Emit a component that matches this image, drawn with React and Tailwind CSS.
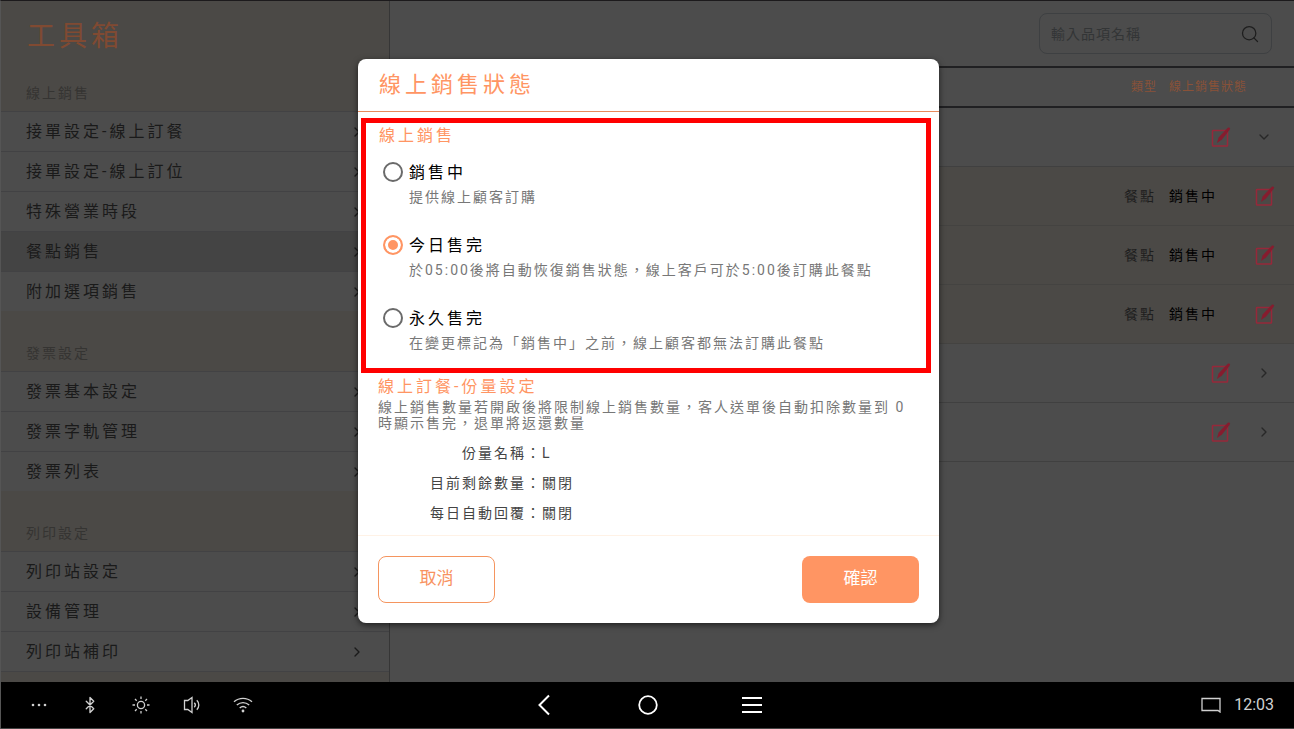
import React, { useState } from 'react';
import { Bluetooth, ChevronDown, ChevronRight, Search } from 'lucide-react';

const menuSections = [
  {
    title: '線上銷售',
    items: ['接單設定-線上訂餐', '接單設定-線上訂位', '特殊營業時段', '餐點銷售', '附加選項銷售'],
  },
  { title: '發票設定', items: ['發票基本設定', '發票字軌管理', '發票列表'] },
  { title: '列印設定', items: ['列印站設定', '設備管理', '列印站補印'] },
];

const products = [
  { id: 1, group: true, open: true },
  { id: 2, type: '餐點', status: '銷售中' },
  { id: 3, type: '餐點', status: '銷售中' },
  { id: 4, type: '餐點', status: '銷售中' },
  { id: 5, group: true },
  { id: 6, group: true },
];

const saleOptions = [
  { value: 'on', label: '銷售中', hint: '提供線上顧客訂購' },
  {
    value: 'today',
    label: '今日售完',
    hint: '於05:00後將自動恢復銷售狀態，線上客戶可於5:00後訂購此餐點',
  },
  {
    value: 'forever',
    label: '永久售完',
    hint: '在變更標記為「銷售中」之前，線上顧客都無法訂購此餐點',
  },
];

const portion = [
  { label: '份量名稱', value: 'L' },
  { label: '目前剩餘數量', value: '關閉' },
  { label: '每日自動回覆', value: '關閉' },
];

const EditIcon = () => (
  <svg width="20" height="20" viewBox="0 0 20 20" fill="none">
    <rect x="1.5" y="3.5" width="15" height="15.500" rx="0.6" stroke="#96283a" strokeWidth="1.500" />
    <path d="M16.800 .8c1.300-1 2.900.4 2 1.800L11 12.600 6 16l1.600-5.600z" fill="#861c2e" />
  </svg>
);

const EditButton = () => (
  <button type="button" aria-label="編輯" className="block">
    <EditIcon />
  </button>
);

const Sidebar = () => (
  <aside className="w-[389px] shrink-0 overflow-hidden border-r border-[#363636] bg-[#4b4946]">
    <h1 className="flex h-[70px] items-center pt-0.5 pl-[26px] text-[28px] tracking-[4px] text-[#804a32]">
      工具箱
    </h1>
    {menuSections.map((section, i) => (
      <section key={section.title}>
        <h2
          className={`flex items-end pb-2 pl-[25px] text-sm tracking-[2px] text-[#353432] ${
            i === 0 ? 'h-10' : 'h-[60px]'
          }`}
        >
          {section.title}
        </h2>
        <ul>
          {section.items.map((item) => (
            <li key={item}>
              <a
                href="#"
                className={`flex h-10 items-center justify-between border-t border-[#424244] pr-6 pl-[25px] tracking-[3px] text-[#1a1a1a] ${
                  item === '餐點銷售' ? 'bg-[#444]' : 'bg-[#4c4c4c]'
                }`}
              >
                {item}
                <ChevronRight size={16} strokeWidth={2} />
              </a>
            </li>
          ))}
        </ul>
      </section>
    ))}
    <div className="h-4 border-t border-[#424244]" />
  </aside>
);

const ProductTable = () => (
  <table className="w-full table-fixed text-left">
    <colgroup>
      <col />
      <col className="w-20" />
      <col className="w-20" />
      <col className="w-[45px]" />
    </colgroup>
    <thead>
      <tr className="h-10 border-y-2 border-[#202022] text-xs tracking-[1px] whitespace-nowrap text-[#8a5238]">
        <th aria-label="品項" />
        <th className="pr-3 text-right font-normal">類型</th>
        <th className="font-normal">線上銷售狀態</th>
        <th aria-label="操作" />
      </tr>
    </thead>
    <tbody>
      {products.map((p) =>
        p.group ? (
          <tr key={p.id} className="h-[59px] border-b border-[#404040] bg-[#4c4c4c]">
            <td />
            <td />
            <td>
              <div className="flex justify-end pr-[18px]">
                <EditButton />
              </div>
            </td>
            <td>
              <button type="button" aria-label="展開" className="ml-[7px] block text-[#282828]">
                {p.open ? <ChevronDown size={16} /> : <ChevronRight size={16} />}
              </button>
            </td>
          </tr>
        ) : (
          <tr key={p.id} className="h-[59px] border-b border-[#444341] bg-[#4b4946] text-sm tracking-[2px]">
            <td />
            <td className="pr-[13px] text-right text-[#1e1e1e]">{p.type}</td>
            <td className="text-black">{p.status}</td>
            <td>
              <div className="pl-[6px]">
                <EditButton />
              </div>
            </td>
          </tr>
        )
      )}
    </tbody>
  </table>
);

const StatusDialog = () => {
  const [status, setStatus] = useState('today');

  return (
    <div
      role="dialog"
      aria-labelledby="dialog-title"
      className="w-full max-w-[581px] rounded-lg bg-white shadow-[0_2px_6px_rgba(0,0,0,0.6)]"
    >
      <h2
        id="dialog-title"
        className="flex h-[53px] items-center border-b border-[#e88a5c] pl-[21px] text-[22px] tracking-[4px] text-[#ff9563]"
      >
        線上銷售狀態
      </h2>

      <div className="mt-[6px] mr-2 ml-[3px] border-[5px] border-[#f00] pb-[13px] pl-[13px]">
        <h3 className="mt-px leading-6 tracking-[3px] text-[#ff9563]">線上銷售</h3>
        <div className="mt-[13px] flex flex-col gap-[25px]">
          {saleOptions.map((option) => (
            <label key={option.value} className="flex items-start gap-[6px] pl-1">
              <input
                type="radio"
                name="status"
                value={option.value}
                checked={status === option.value}
                onChange={() => setStatus(option.value)}
                className="mt-px size-5 shrink-0 appearance-none rounded-full border-2 border-[#6a6a6a] checked:border-[#ff9563] checked:bg-[#ff9563] checked:shadow-[inset_0_0_0_3px_white]"
              />
              <span>
                <span className="block leading-6 tracking-[3px] text-black">{option.label}</span>
                <span className="block text-sm leading-6 tracking-[2px] text-[#777]">
                  {option.hint}
                </span>
              </span>
            </label>
          ))}
        </div>
      </div>

      <div className="mr-5 ml-5">
        <h3 className="mt-[2px] leading-6 tracking-[3px] text-[#ff9563]">線上訂餐-份量設定</h3>
        <p className="text-sm leading-4 tracking-[2px] text-[#777]">
          線上銷售數量若開啟後將限制線上銷售數量，客人送單後自動扣除數量到 0 時顯示售完，退單將返還數量
        </p>
        <dl className="mt-[7px] grid grid-cols-[164px_1fr] text-sm leading-[30px] tracking-[2px] text-[#444]">
          {portion.map((row) => (
            <React.Fragment key={row.label}>
              <dt className="text-right">{row.label}：</dt>
              <dd>{row.value}</dd>
            </React.Fragment>
          ))}
        </dl>
      </div>

      <div className="mt-[7px] flex justify-between border-t border-[#fff2e6] px-5 py-5 text-[17px]">
        <button
          type="button"
          className="h-[47px] w-[117px] rounded-lg border border-[#f5955f] text-[#f8925f]"
        >
          取消
        </button>
        <button type="button" className="h-[47px] w-[117px] rounded-lg bg-[#ff9563] text-white">
          確認
        </button>
      </div>
    </div>
  );
};

const navButton = 'flex w-[51px] items-center justify-center';

const SystemBar = () => (
  <footer className="grid h-[47px] shrink-0 grid-cols-[1fr_auto_1fr] border-b border-[#444] bg-black text-[#d0d0d0]">
    <div className="flex pl-3">
      <button type="button" aria-label="更多" className={navButton}>
        <svg width="16" height="4" viewBox="0 0 16 4" fill="currentColor">
          <circle cx="2" cy="2" r="1.300" />
          <circle cx="8" cy="2" r="1.300" />
          <circle cx="14" cy="2" r="1.300" />
        </svg>
      </button>
      <button type="button" aria-label="藍牙" className={navButton}>
        <Bluetooth size={18} strokeWidth={1.800} />
      </button>
      <button type="button" aria-label="亮度" className={navButton}>
        <svg width="18" height="18" viewBox="0 0 18 18" fill="none" stroke="currentColor" strokeWidth="1.300">
          <circle cx="9" cy="9" r="3.600" />
          <path d="M9 .5v2.500M9 15v2.500M.5 9H3M15 9h2.500M3 3l1.700 1.700M13.300 13.300L15 15M3 15l1.700-1.700M13.300 4.700L15 3" />
        </svg>
      </button>
      <button type="button" aria-label="音量" className={navButton}>
        <svg width="18" height="18" viewBox="0 0 18 18" fill="none" stroke="currentColor" strokeWidth="1.300">
          <path d="M1.500 4.500h3.300L9 1.500v15l-4.200-3H1.500z" />
          <path d="M11.300 6.800c1.200 1.200 1.200 3.200 0 4.400M13.800 4.300c2.700 2.700 2.700 6.700 0 9.400" />
        </svg>
      </button>
      <button type="button" aria-label="無線網路" className={navButton}>
        <svg width="20" height="18" viewBox="0 0 20 18" fill="none" stroke="currentColor" strokeWidth="1.400">
          <path d="M1 5.800c5.200-4.600 12.800-4.600 18 0M3.800 9c3.700-3.200 8.700-3.200 12.400 0M6.700 12c2-1.700 4.600-1.700 6.600 0" />
          <circle cx="10" cy="15" r="1.400" fill="currentColor" stroke="none" />
        </svg>
      </button>
    </div>
    <div className="flex text-white">
      <button type="button" aria-label="返回" className="flex w-[104px] items-center justify-center">
        <svg width="14" height="22" viewBox="0 0 14 22" fill="none" stroke="currentColor" strokeWidth="2">
          <path d="M12 1.500L2.500 11l9.500 9.500" />
        </svg>
      </button>
      <button type="button" aria-label="主畫面" className="flex w-[104px] items-center justify-center">
        <svg width="20" height="20" viewBox="0 0 20 20" fill="none" stroke="currentColor" strokeWidth="1.800">
          <circle cx="10" cy="10" r="8.800" />
        </svg>
      </button>
      <button type="button" aria-label="選單" className="flex w-[104px] items-center justify-center">
        <svg width="20" height="18" viewBox="0 0 20 18" stroke="currentColor" strokeWidth="2">
          <path d="M0 2h20M0 9h20M0 16h20" />
        </svg>
      </button>
    </div>
    <div className="flex items-center justify-end gap-[13px] pr-5">
      <svg width="20" height="16" viewBox="0 0 20 16" fill="none" stroke="currentColor" strokeWidth="1.300">
        <path d="M1 1.500h18v13.500l-2-1.500H1z" />
      </svg>
      <time className="text-base">12:03</time>
    </div>
  </footer>
);

export default function App() {
  return (
    <div className="flex h-screen flex-col border-t border-l border-t-[#1c1a1c] border-l-[#555] bg-[#4c4c4c] font-[Roboto,'Noto_Sans_CJK_TC',sans-serif]">
      <div className="relative flex min-h-0 flex-1">
        <Sidebar />
        <main className="min-w-0 flex-1">
          <div className="flex h-[65px] items-center justify-end pr-[22px]">
            <div className="flex h-[41px] w-[233px] items-center rounded-lg border border-[#3e4042] px-[11px]">
              <input
                type="search"
                aria-label="輸入品項名稱"
                placeholder="輸入品項名稱"
                className="min-w-0 flex-1 bg-transparent text-sm tracking-[1px] outline-none placeholder:text-[#333536]"
              />
              <Search size={20} strokeWidth={1.500} className="text-[#1e1e1e]" />
            </div>
          </div>
          <ProductTable />
        </main>
        <div className="absolute inset-0 flex items-center justify-center pb-0.5 pl-0.5">
          <StatusDialog />
        </div>
      </div>
      <SystemBar />
    </div>
  );
}
